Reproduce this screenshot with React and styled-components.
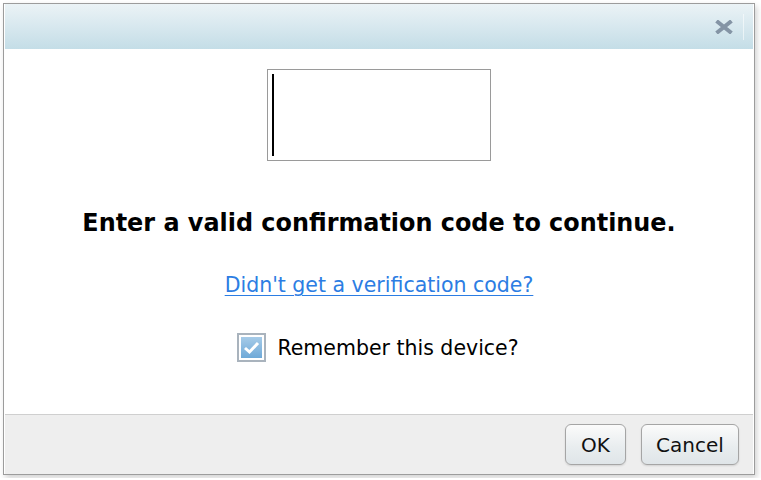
import React from 'react';
import styled, { createGlobalStyle } from 'styled-components';

const GlobalStyle = createGlobalStyle`
  html, body {
    margin: 0;
    padding: 0;
    background: #ffffff;
  }
  body {
    padding: 3px;
    font-family: "DejaVu Sans", Verdana, sans-serif;
  }
`;

const Dialog = styled.div`
  box-sizing: border-box;
  width: 752px;
  height: 472px;
  border: 1px solid #9c9c9c;
  padding: 0 1px 0 1px;
  background: #ffffff;
  box-shadow: 2px 3px 6px rgba(0, 0, 0, 0.18);
  display: flex;
  flex-direction: column;
`;

const TitleBar = styled.div`
  height: 45px;
  flex: none;
  background: linear-gradient(to bottom, #ebf3f6 0%, #c4dde7 100%);
  display: flex;
  align-items: center;
  justify-content: flex-end;
`;

const CloseButton = styled.button`
  border: 0;
  background: transparent;
  padding: 0;
  width: 24px;
  height: 24px;
  display: flex;
  align-items: center;
  justify-content: center;
  cursor: pointer;
`;

const Divider = styled.span`
  width: 1px;
  height: 26px;
  margin: 0 9px 0 7px;
  background: rgba(255, 255, 255, 0.55);
`;

const Body = styled.div`
  flex: 1;
  display: flex;
  flex-direction: column;
  align-items: center;
  padding-top: 20px;
`;

const CodeField = styled.div`
  box-sizing: border-box;
  width: 224px;
  height: 92px;
  border: 1px solid #9a9a9a;
  padding: 4px 0 4px 4px;
  display: flex;
`;

const Caret = styled.span`
  width: 2px;
  background: #000;
`;

const Message = styled.h2`
  margin: 48px 0 0;
  font-size: 23.9px;
  line-height: 28px;
  font-weight: bold;
  color: #000;
`;

const HelpLink = styled.a`
  margin-top: 36px;
  font-size: 20.5px;
  line-height: 24px;
  color: #2c7de3;
  text-decoration: underline;
  text-underline-offset: 3px;
  text-decoration-thickness: 1px;
`;

const RememberRow = styled.label`
  margin-top: 36px;
  margin-left: -2px;
  display: flex;
  align-items: center;
  gap: 11px;
  font-size: 20.5px;
  line-height: 28px;
  color: #000;
`;

const CheckBox = styled.span`
  box-sizing: border-box;
  width: 29px;
  height: 29px;
  border: 2px solid #a9b3bd;
  padding: 2px;
  background: #ffffff;
  display: flex;
`;

const CheckFill = styled.span`
  flex: 1;
  background: linear-gradient(to bottom, #a6cbe8 0%, #6ea9d8 100%);
  display: flex;
  align-items: center;
  justify-content: center;
`;

const Footer = styled.div`
  height: 59px;
  flex: none;
  border-top: 1px solid #cfcfcf;
  background: #eeeeee;
  display: flex;
  align-items: center;
  justify-content: flex-end;
  gap: 15px;
  padding-right: 14px;
`;

const Button = styled.button`
  box-sizing: border-box;
  height: 41px;
  min-width: ${props => props.wide ? '98px' : '61px'};
  padding: 0 12px;
  border: 1px solid #a5a5a5;
  border-radius: 6px;
  background: linear-gradient(to bottom, #fbfbfb 0%, #e9edef 55%, #dfe5e8 100%);
  box-shadow: 0 1px 2px rgba(0, 0, 0, 0.12);
  font-family: "DejaVu Sans", Verdana, sans-serif;
  font-size: 20px;
  color: #111;
  cursor: pointer;
`;

export default function App() {
  return (
    <>
      <GlobalStyle />
      <Dialog>
        <TitleBar>
          <CloseButton aria-label="Close">
            <svg width="18" height="14" viewBox="0 0 18 14">
              <path d="M1.5 1 L16.5 13 M16.5 1 L1.5 13" stroke="#8494a5" strokeWidth="4" strokeLinecap="butt" />
            </svg>
          </CloseButton>
          <Divider />
        </TitleBar>
        <Body>
          <CodeField>
            <Caret />
          </CodeField>
          <Message>Enter a valid confirmation code to continue.</Message>
          <HelpLink href="#">Didn't get a verification code?</HelpLink>
          <RememberRow>
            <CheckBox>
              <CheckFill>
                <svg width="17" height="15" viewBox="0 0 17 15">
                  <path d="M2 8 L6.5 12 L15 3" fill="none" stroke="#ffffff" strokeWidth="3" />
                </svg>
              </CheckFill>
            </CheckBox>
            Remember this device?
          </RememberRow>
        </Body>
        <Footer>
          <Button>OK</Button>
          <Button wide>Cancel</Button>
        </Footer>
      </Dialog>
    </>
  );
}
